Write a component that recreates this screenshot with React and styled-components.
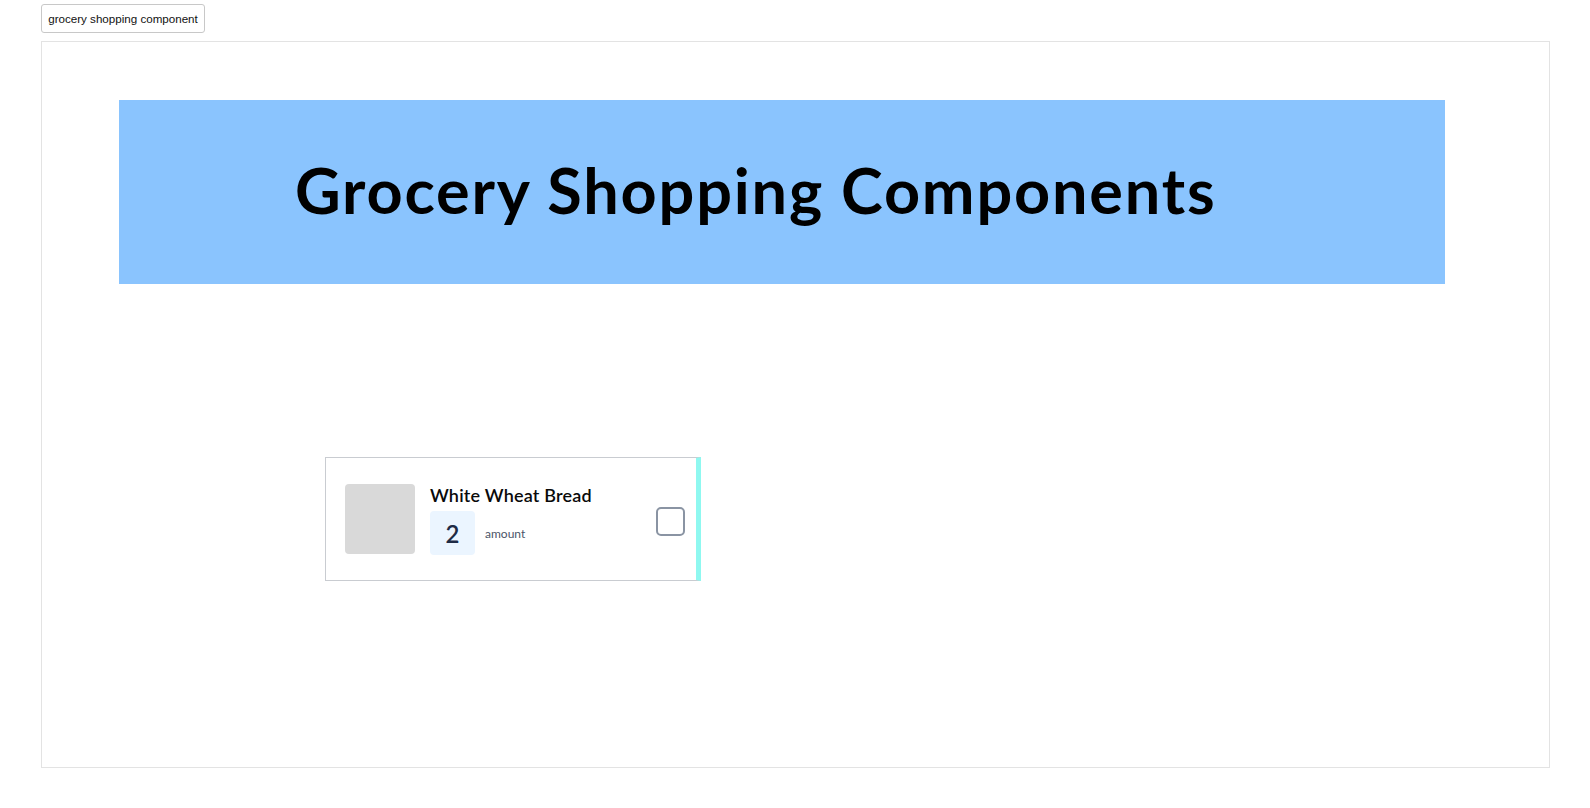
import React from "react";
import styled, { createGlobalStyle } from "styled-components";

const Global = createGlobalStyle`
  html, body { margin: 0; padding: 0; background: #fff; }
  body { font-family: "Lato", "Noto Sans", sans-serif; }
`;

const Page = styled.div`
  padding: 4px 0 0 41px;
  display: flex;
  flex-direction: column;
  align-items: flex-start;
  gap: 8px;
`;

const StoryButton = styled.button`
  height: 29px;
  width: 164px;
  padding: 0 5px;
  background: #fff;
  border: 1px solid #c8c8c8;
  border-radius: 3px;
  font-family: "Liberation Sans", Arial, sans-serif;
  font-size: 11.6px;
  color: #111;
  white-space: nowrap;
`;

const Frame = styled.div`
  box-sizing: border-box;
  width: 1509px;
  height: 727px;
  border: 1px solid #e3e3e3;
  padding: 58px 0 0 77px;
  display: flex;
  flex-direction: column;
  align-items: flex-start;
`;

const Banner = styled.header`
  width: 1326px;
  height: 184px;
  background: #8ac4fe;
  display: flex;
  align-items: center;
  padding-left: 176px;
  box-sizing: border-box;
`;

const Title = styled.h1`
  margin: 0;
  font-family: "Lato", sans-serif;
  font-weight: 700;
  font-size: 63px;
  letter-spacing: 1.8px;
  color: #000;
  line-height: 1;
  white-space: nowrap;
  position: relative;
  top: -3px;
`;

const CardArea = styled.section`
  margin-top: 173px;
  padding-left: 206px;
`;

const Card = styled.div`
  box-sizing: border-box;
  width: 376px;
  height: 124px;
  border: 1px solid #c9ccd1;
  border-right: 5px solid #8ff8f0;
  padding: 0 11px 0 19px;
  display: flex;
  align-items: center;
  justify-content: space-between;
`;

const Left = styled.div`
  display: flex;
  align-items: center;
  gap: 15px;
`;

const Thumb = styled.div`
  width: 70px;
  height: 70px;
  border-radius: 4px;
  background: #d9d9d9;
`;

const Info = styled.div`
  display: flex;
  flex-direction: column;
  gap: 4px;
`;

const Name = styled.div`
  font-family: "Lato", sans-serif;
  font-weight: 600;
  font-size: 18px;
  letter-spacing: 0.2px;
  line-height: 24px;
  color: #0a0a0a;
`;

const AmountRow = styled.div`
  display: flex;
  align-items: center;
  gap: 10px;
`;

const AmountBox = styled.div`
  width: 45px;
  height: 44px;
  border-radius: 4px;
  background: #ebf5ff;
  display: flex;
  align-items: center;
  justify-content: center;
  font-family: "Lato", sans-serif;
  font-weight: 600;
  font-size: 24px;
  color: #1e2b45;
`;

const AmountLabel = styled.span`
  font-family: "Lato", sans-serif;
  font-size: 12px;
  color: #4b5568;
`;

const Check = styled.div`
  box-sizing: border-box;
  width: 29px;
  height: 29px;
  border: 2px solid #8a94a3;
  border-radius: 5px;
  background: #fff;
  margin-top: 4px;
`;

export default function App() {
  return (
    <>
      <Global />
      <Page>
        <StoryButton>grocery shopping component</StoryButton>
        <Frame>
          <Banner>
            <Title>Grocery Shopping Components</Title>
          </Banner>
          <CardArea>
            <Card>
              <Left>
                <Thumb />
                <Info>
                  <Name>White Wheat Bread</Name>
                  <AmountRow>
                    <AmountBox>2</AmountBox>
                    <AmountLabel>amount</AmountLabel>
                  </AmountRow>
                </Info>
              </Left>
              <Check />
            </Card>
          </CardArea>
        </Frame>
      </Page>
    </>
  );
}
